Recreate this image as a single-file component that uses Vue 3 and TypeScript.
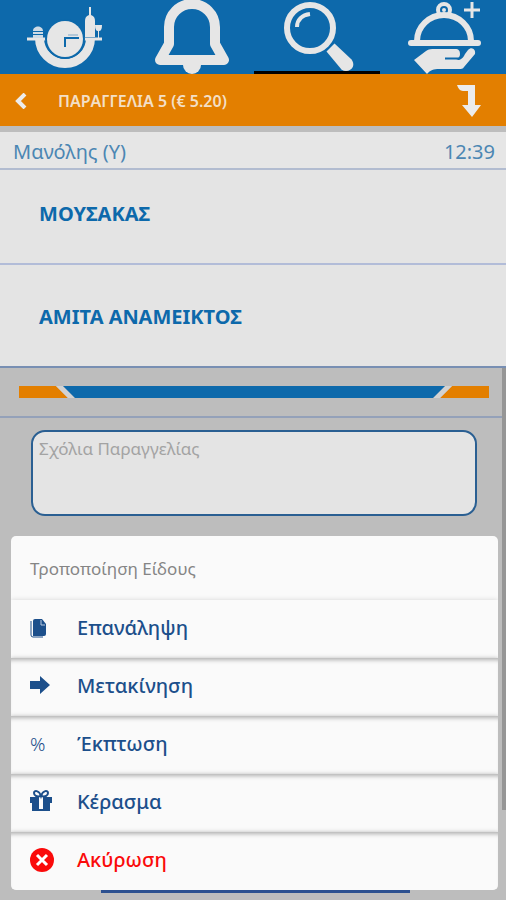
<script setup lang="ts">
import { ref } from 'vue'

type ActionIcon = 'copy' | 'move' | 'percent' | 'gift' | 'cancel'

interface Action {
  icon: ActionIcon
  label: string
  danger?: boolean
}

const items: string[] = ['ΜΟΥΣΑΚΑΣ', 'ΑΜΙΤΑ ΑΝΑΜΕΙΚΤΟΣ']
const comments = ref('')

const actions: Action[] = [
  { icon: 'copy', label: 'Επανάληψη' },
  { icon: 'move', label: 'Μετακίνηση' },
  { icon: 'percent', label: 'Έκπτωση' },
  { icon: 'gift', label: 'Κέρασμα' },
  { icon: 'cancel', label: 'Ακύρωση', danger: true },
]
</script>

<template>
  <div class="screen">
    <nav class="tabs">
      <button class="tab" type="button" aria-label="Αρχική">
        <svg viewBox="2 0 126 74" aria-hidden="true">
          <path d="M39.500 38a25.500 25.500 0 0 0 51 0" fill="none" stroke="#e6e6e6" stroke-width="9" />
          <path d="M27 39h19M84 39h18" stroke="#e6e6e6" stroke-width="3" />
          <circle cx="65" cy="39" r="20" fill="#0d69ab" />
          <circle cx="65" cy="39" r="18" fill="#e6e6e6" />
          <path d="M65 47v-9h14" fill="none" stroke="#0d69ab" stroke-width="2" />
          <path d="M68 35h10" stroke="#7fa8c8" stroke-width="1" />
          <path d="M33 31c0-6 10-6 10 0zM33 32h10v2H33zM33 35h10v3H33z" fill="#cfdbe5" />
          <path d="M89 7h2v8c3 1 4 3 4 6v16H85V21c0-3 1-5 4-6z" fill="#e6e6e6" />
          <path d="M95 25h7c0 4-1 6-3 6v7h-1v-7c-2 0-3-2-3-6z" fill="#e6e6e6" />
        </svg>
      </button>
      <button class="tab" type="button" aria-label="Ειδοποιήσεις">
        <svg viewBox="128 0 126 74" aria-hidden="true">
          <path d="M160 60l9-16V27a23 23 0 0 1 46 0v17l9 16z" fill="none" stroke="#e6e6e6" stroke-width="10" stroke-linejoin="round" />
          <circle cx="192" cy="65" r="9" fill="#e6e6e6" />
        </svg>
      </button>
      <button class="tab active" type="button" aria-label="Αναζήτηση">
        <svg viewBox="254 0 126 74" aria-hidden="true">
          <circle cx="310" cy="28" r="23" fill="none" stroke="#e6e6e6" stroke-width="6" />
          <path d="M297 27c0-7 5-12 13-13" fill="none" stroke="#e6e6e6" stroke-width="4" />
          <path d="M326.500 51.500l8-8 17 16c3 4 2 8-1 10s-6 2-9 0z" fill="#e6e6e6" />
        </svg>
      </button>
      <button class="tab" type="button" aria-label="Νέα παραγγελία">
        <svg viewBox="380 0 126 74" aria-hidden="true">
          <circle cx="444" cy="10" r="6" fill="none" stroke="#e6e6e6" stroke-width="4" />
          <circle cx="444" cy="10" r="2" fill="#e6e6e6" />
          <path d="M417 41a27 26 0 0 1 54 0" fill="none" stroke="#e6e6e6" stroke-width="6" />
          <path d="M411 43h67" stroke="#e6e6e6" stroke-width="6" stroke-linecap="round" />
          <path d="M472 2v16M464 10h16" stroke="#e6e6e6" stroke-width="3" />
          <path d="M414 60l12-9c3-2 5-2 9-2h20c4 0 5 2 5 5 0 4-2 6-5 6h2c4 0 6-2 8-6l3-4c4-4 8 0 7 4l-11 13c-1 2-3 2-5 2h-20c-5 0-9 1-12 5z" fill="#e6e6e6" />
          <path d="M445 58.500h13c2 0 3-2 3-4" fill="none" stroke="#0d69ab" stroke-width="2" />
        </svg>
      </button>
    </nav>

    <header class="order-bar">
      <button class="icon-button" type="button" aria-label="Πίσω">
        <svg class="back" viewBox="0 0 12 16" aria-hidden="true">
          <path d="M10 1L3 8l7 7" fill="none" stroke="#ececec" stroke-width="4" />
        </svg>
      </button>
      <h1>ΠΑΡΑΓΓΕΛΙΑ 5 (€ 5.20)</h1>
      <button class="icon-button" type="button" aria-label="Μετάβαση στο τέλος">
        <svg class="down" viewBox="0 0 24 32" aria-hidden="true">
          <path d="M0 0h18v20h6l-9 12-10-12h6V6H6C3 6 1 3 0 0z" fill="#ececec" />
        </svg>
      </button>
    </header>

    <main>
      <div class="customer">
        <span>Μανόλης (Υ)</span>
        <time>12:39</time>
      </div>
      <ul class="items">
        <li v-for="item in items" :key="item">{{ item }}</li>
      </ul>

      <div class="lower">
        <div class="ribbon">
          <svg class="ribbon-end" viewBox="0 0 56 12" aria-hidden="true">
            <path d="M0 0h37l12 12H0z" fill="#e37f00" />
            <path d="M37 0h7l12 12h-7z" fill="#d2d2d2" />
            <path d="M44 0h12v12z" fill="#0d69ab" />
          </svg>
          <span class="ribbon-line"></span>
          <svg class="ribbon-end" viewBox="0 0 56 12" aria-hidden="true">
            <path d="M56 0H19L7 12h49z" fill="#e37f00" />
            <path d="M19 0h-7L0 12h7z" fill="#d2d2d2" />
            <path d="M12 0H0v12z" fill="#0d69ab" />
          </svg>
        </div>
        <div class="comments">
          <textarea v-model="comments" aria-label="Σχόλια Παραγγελίας" placeholder="Σχόλια Παραγγελίας"></textarea>
        </div>
        <button class="submit" type="button" aria-label="Αποστολή"></button>
        <span class="scroll-thumb"></span>
      </div>
    </main>

    <section class="sheet" role="dialog" aria-labelledby="sheet-title">
      <h2 id="sheet-title">Τροποποίηση Είδους</h2>
      <button
        v-for="action in actions"
        :key="action.icon"
        class="action"
        :class="{ danger: action.danger }"
        type="button"
      >
        <span class="action-icon">
          <svg v-if="action.icon === 'copy'" viewBox="0 0 24 24" aria-hidden="true">
            <path d="M3 5q0-2 2-2h7l4 5v10q0 2-2 2H3z" fill="currentColor" />
            <path d="M11 4v5h4" fill="none" stroke="#b9cbe0" stroke-width="1" />
            <path d="M1 5v14q0 2 2 2h10" fill="none" stroke="currentColor" stroke-width="1" />
          </svg>
          <svg v-else-if="action.icon === 'move'" viewBox="0 0 24 24" aria-hidden="true">
            <path d="M0 7h10V2l10 9-10 9v-5H0z" fill="currentColor" />
          </svg>
          <span v-else-if="action.icon === 'percent'">%</span>
          <svg v-else-if="action.icon === 'gift'" viewBox="0 0 24 24" aria-hidden="true">
            <path d="M0 7h9v12h4V7h9v6h-2v8H2v-8H0z" fill="currentColor" />
            <path d="M11 6C9 0 4 0 4 3s3 4 7 3c4 1 7 0 7-3s-5-3-7 3z" fill="none" stroke="currentColor" stroke-width="2" />
          </svg>
          <svg v-else viewBox="0 0 24 24" aria-hidden="true">
            <circle cx="12" cy="12" r="12" fill="currentColor" />
            <path d="M7 7l10 10M17 7L7 17" stroke="#fff" stroke-width="3" />
          </svg>
        </span>
        <span>{{ action.label }}</span>
      </button>
    </section>
  </div>
</template>

<style>
body {
  margin: 0;
  background: #bdbdbd;
}
</style>

<style scoped>
* {
  box-sizing: border-box;
}

.screen {
  position: relative;
  display: flex;
  flex-direction: column;
  min-height: 100vh;
  background: #bdbdbd;
  color: #0d69ab;
  font-family: 'Noto Sans', 'Open Sans', sans-serif;
}

button {
  margin: 0;
  padding: 0;
  border: 0;
  background: none;
  color: inherit;
  font: inherit;
}

svg {
  display: block;
}

.tabs {
  display: grid;
  grid-template-columns: repeat(4, 1fr);
  padding-left: 2px;
  background: #0d69ab;
}

.tab {
  display: flex;
  justify-content: center;
  height: 74px;
}

.tab svg {
  width: 126px;
  height: 74px;
}

.tab.active {
  box-shadow: inset 0 -3px #000;
}

.order-bar {
  display: flex;
  align-items: center;
  height: 52px;
  padding: 1px 25px 0 15px;
  background: #e37f00;
  color: #f3dfc6;
}

.order-bar h1 {
  flex: 1;
  margin: 0 0 0 31px;
  font-size: 16px;
  font-weight: 600;
  line-height: 24px;
}

.back {
  width: 12px;
  height: 16px;
}

.down {
  width: 24px;
  height: 32px;
}

main {
  display: flex;
  flex: 1;
  flex-direction: column;
  padding-top: 6px;
}

.customer {
  display: flex;
  align-items: center;
  justify-content: space-between;
  height: 38px;
  padding: 4px 11px 0 13px;
  border-bottom: 2px solid #b2bcd0;
  background: #e6e6e6;
  color: #4c86b3;
  font-size: 20px;
  font-weight: 400;
  line-height: 28px;
}

.items {
  margin: 0;
  padding: 0;
  list-style: none;
}

.items li {
  padding: 30px 39px 35px;
  border-bottom: 2px solid #b2bcd8;
  background: #e4e4e4;
  font-size: 20px;
  font-weight: 700;
  line-height: 28px;
}

.items li:last-child {
  padding: 38px 39px 35px;
  border-color: #788fb3;
}

.lower {
  position: relative;
  display: flex;
  flex: 1;
  flex-direction: column;
}

.ribbon {
  display: flex;
  padding: 18px 17px 18px 19px;
  border-bottom: 2px solid #94a1b9;
}

.ribbon-end {
  width: 56px;
  height: 12px;
}

.ribbon-line {
  flex: 1;
  background: #0d69ab;
}

.comments {
  padding: 12px 29px 0 31px;
}

textarea {
  display: block;
  width: 100%;
  height: 86px;
  padding: 6px;
  border: 2px solid #2a5f92;
  border-radius: 14px;
  background: #e4e4e4;
  color: #0d69ab;
  font-family: inherit;
  font-size: 17px;
  line-height: 22px;
  resize: none;
}

textarea::placeholder {
  color: #a3a3a3;
  opacity: 1;
}

.submit {
  width: 61%;
  height: 48px;
  margin: auto auto 7px 101px;
  border-bottom: 3px solid #2d5190;
}

.scroll-thumb {
  position: absolute;
  top: 0;
  right: 0;
  bottom: 90px;
  width: 4px;
  background: #969696;
}

.sheet {
  position: absolute;
  right: 8px;
  bottom: 10px;
  left: 11px;
  overflow: hidden;
  border-radius: 5px;
  background: #fafafa;
  color: #1c4f8b;
}

.sheet h2 {
  margin: 0;
  padding: 21px 19px 19px;
  color: #858585;
  font-size: 17px;
  font-weight: 400;
  line-height: 24px;
}

.action {
  display: flex;
  align-items: center;
  width: 100%;
  height: 58px;
  padding: 0 0 3px 19px;
  background: #fafafa;
  box-shadow: 0 0 4px rgba(0, 0, 0, 0.25), inset 0 5px 4px -3px rgba(0, 0, 0, 0.3);
  font-size: 20px;
  font-weight: 500;
  text-align: left;
}

h2 + .action {
  box-shadow: 0 0 5px rgba(0, 0, 0, 0.15);
}

.action-icon {
  width: 47px;
  font-size: 19px;
  font-weight: 300;
}

.action-icon svg {
  width: 24px;
  height: 24px;
}

.action.danger {
  color: #fa0a0a;
}
</style>
